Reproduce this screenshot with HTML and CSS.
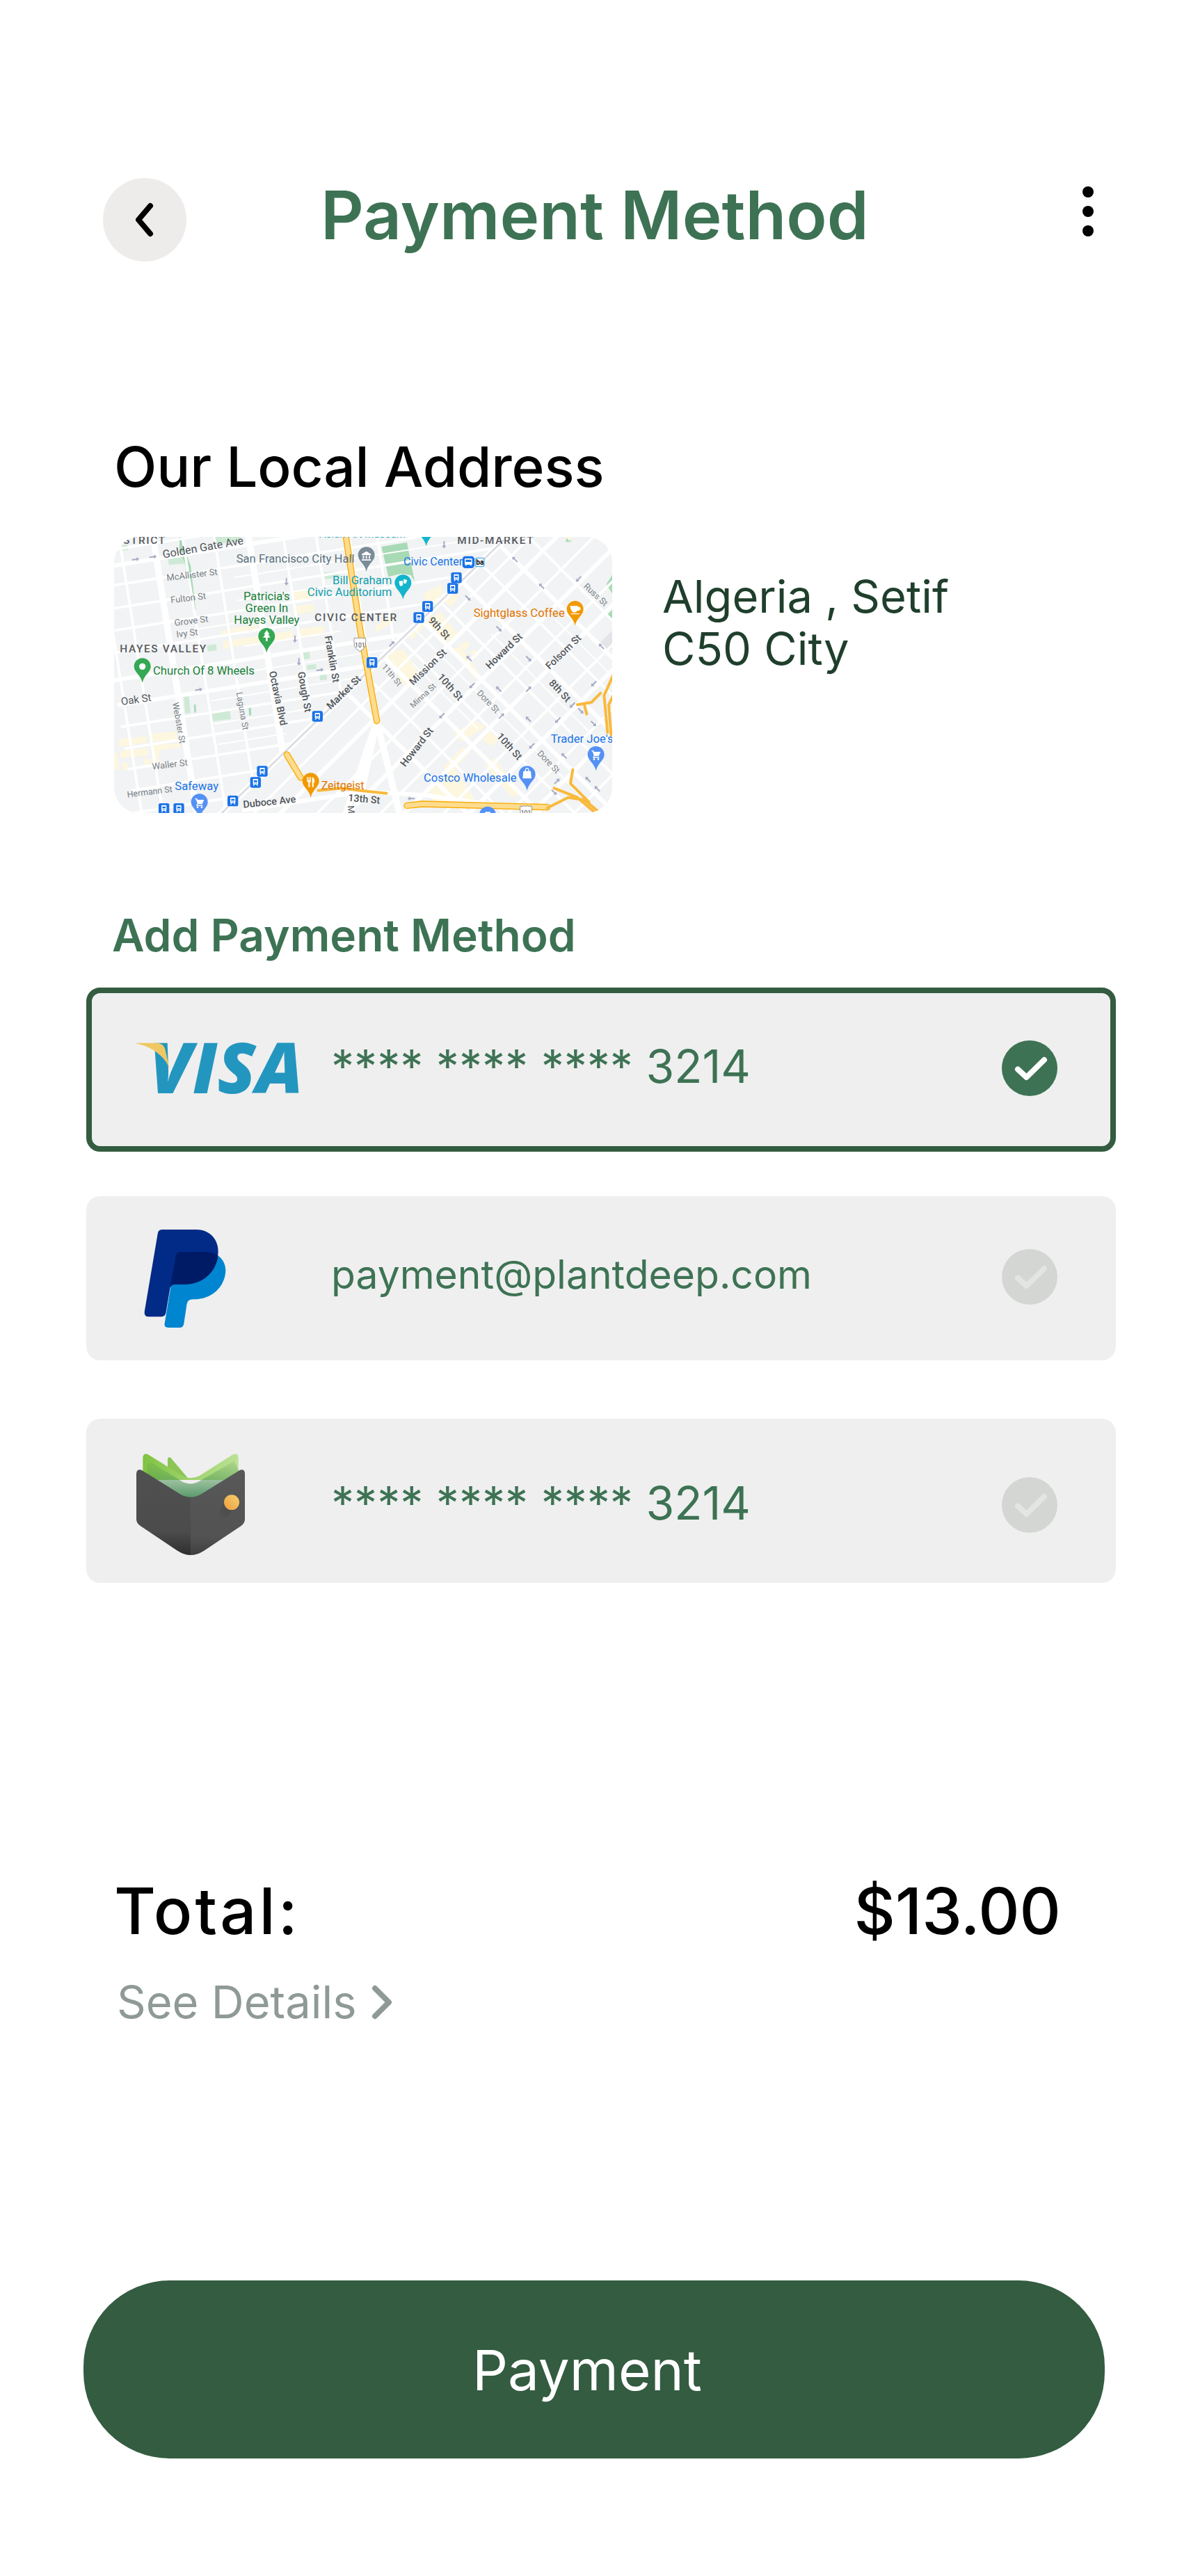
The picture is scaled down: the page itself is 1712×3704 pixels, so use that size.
FILE: index.html
```html
<!DOCTYPE html>
<html lang="en">
<head>
<meta charset="utf-8">
<title>Payment Method</title>
<link rel="stylesheet" href="styles.css">
</head>
<body>
<main class="page">
  <header class="top">
    <button class="back" aria-label="Back">
      <svg class="back-ic" viewBox="0 0 34 52"><path d="M25 6 8 26l17 20"/></svg>
    </button>
    <h1 class="title">Payment Method</h1>
    <div class="dots"><i></i><i></i><i></i></div>
  </header>

  <section class="address">
    <h2 class="address-h">Our Local Address</h2>
    <div class="address-row">
      <svg class="map" viewBox="0 6 2148 1191">
        <defs>
          <clipPath id="rnd"><rect x="0" y="6" width="2148" height="1191" rx="110"/></clipPath>
          <clipPath id="nw"><path d="M0 0H1690L480 1197H0Z"/></clipPath>
          <clipPath id="se"><path d="M1660 0H2148V1197H470Z"/></clipPath>
          <path id="pin" d="M0-36C-20-36-36-20-36 0-36 25-8 35 0 70 8 35 36 25 36 0 36-20 20-36 0-36Z"/>
          <g id="tr">
            <rect class="tr-bg" x="-23" y="-23" width="46" height="46" rx="8"/>
            <path class="wh" d="M-9-15H9Q11-15 11-12V6Q11 9 8 9L11 15H7L4 9H-4L-7 15H-11L-8 9Q-11 9-11 6V-12Q-11-15-9-15ZM-7-9V-1H7V-9ZM-5 2V6H-2V2ZM2 2V6H5V2Z"/>
          </g>
          <path id="ar" d="M-16-3H4V-9L16 0 4 9V3H-16Z"/>
          <g id="cart"><path class="wh" d="M-19-18H-11L-8-12H20L12 6H-6L-8 10H14V14H-14L-9 4-15-14H-19ZM-8 16A4 4 0 1 1-8 24 4 4 0 1 1-8 16ZM10 16A4 4 0 1 1 10 24 4 4 0 1 1 10 16Z"/></g>
          <g id="sh">
            <path class="sh" d="M-24-28Q-14-24-8-29 0-25 8-29 14-24 24-28 28-16 24-6 28 14 0 30-28 14-24-6-28-16-24-28Z"/>
            <text class="lab shn" x="0" y="12" text-anchor="middle">101</text>
          </g>
        </defs>
        <g clip-path="url(#rnd)">
          <rect class="bg" x="0" y="0" width="2148" height="1200"/>

          <!-- parks -->
          <path class="pk" d="M430 6H545L540 25 435 38ZM232 100 300 92 302 122 236 126ZM25 45 58 38 60 62 28 66ZM300 690 322 688 330 765 306 768ZM420 768 498 752 505 792 422 802ZM810 505 842 500 845 530 814 535ZM830 560 870 555 872 575 832 580ZM885 595 915 590 918 622 888 625ZM905 160 970 155 972 182 910 188ZM400 475 440 468 442 496 405 500Z"/>
          <path class="pkl" d="M282 8V60L308 130 340 322H352L330 130 304 60 300 8ZM344 730 352 728 354 762 346 764ZM580 742 590 740 592 775 582 776Z"/>
          <g transform="translate(1068 0)"><path class="pk2" d="M85 48 195 30 228 198 210 170 170 165 115 178ZM1055 210 1080 170V250ZM1055 345 1080 320V370ZM885 6H905L900 28H880Z"/><path class="gr" d="M1030 460 1080 410V490L1060 490Z"/></g>

          <!-- beige blocks -->
          <path class="bz" d="M770 240 860 228V275L770 285ZM775 305 860 295V330L775 340ZM505 400 620 385V415L505 430ZM510 450 770 410V445L510 480ZM790 405 905 390V425L790 437ZM465 410 490 405V435L465 437ZM470 455 497 452V487L470 490ZM20 880 140 865V895L20 912ZM155 855 270 845V880L155 890ZM25 930 145 915 148 950 28 960ZM160 905 285 895V915L195 925 190 985H165ZM35 980 60 978 62 1010 35 1012ZM125 965 155 962 158 995 128 997ZM0 940 15 938 20 1010H0Z"/>
          <g transform="translate(1068 0)"><path class="bz" d="M260 255 340 210 350 250 300 300ZM350 270 410 240 420 260 385 310 350 280ZM190 420 340 330 420 430 350 470 280 380 215 450ZM100 510 180 490 250 600 180 650ZM380 490 430 480 510 600 490 620ZM420 470 460 455 465 475 445 495ZM470 500 490 490 500 520 480 535ZM395 850 490 800 535 825 430 890ZM520 880 550 845 590 880 560 910ZM350 1000 440 910 470 930 370 1040ZM530 990 570 960 690 1110 650 1130ZM290 1100 400 1000 500 1160 310 1150ZM60 390 130 340 140 370 60 420ZM880 6H910L895 25Z"/></g>

          <!-- north-west street grid -->
          <g clip-path="url(#nw)">
            <g transform="rotate(-9)" class="roads">
              <path class="r3" d="M-100 60H1900M-100 212H1900M-100 310H1900M-100 405H1900M-100 500H1900M-100 820H1900M-100 915H1900M-100 1005H1900M-100 1098H1900M-100 1195H1900M-100 1290H1900"/>
              <path class="r1" d="M-100 128H1900M-100 617H1900M-100 726H1900"/>
              <path class="r4" d="M480 260H1500M480 360H900M200 455H700M480 560H900M480 670H1100M300 770H1000M300 870H700M300 960H600"/>
              <path class="r3" d="M20-100V1500M290-100V1500M425-100V1500M720-100V1500M860-100V1500M1000-100V1500M1120-100V1500M-70-100V1500"/>
              <path class="r2" d="M165-100V1500M572-100V1500"/>
            </g>
          </g>

          <!-- south-east street grid -->
          <g clip-path="url(#se)">
            <g transform="rotate(45)" class="roads">
              <path class="r3" d="M1273-2000V2000M1467-2000V2000M1660-2000V2000M1853-2000V2000M2050-2000V2000M2250-2000V2000"/>
              <path class="r1" d="M1354-2000V2000M1560-2000V2000M1732-2000V2000M1930-2000V2000M2120-2000V2000"/>
              <path class="r3" d="M-2000-340H4000M-2000-558H4000M-2000-792H4000M-2000-1032H4000M-2000-1260H4000"/>
              <path class="r1" d="M-2000-230H4000M-2000-452H4000M-2000-680H4000M-2000-920H4000M-2000-1146H4000"/>
              <path class="r4" d="M1200-630H1900M1400-630H2200M1450-850H2100M1600-1090H2000M1300-520H1700"/>
            </g>
          </g>
          <path class="r2 rc" d="M1133 800 1000 1197M1133 800 1230 1197M1133 800 1068 1100"/>
          <path class="r1 rc" d="M560 1185 1068 1105 1340 1120 1700 1170"/>

          <!-- Market St and rail -->
          <path class="r2 rc" d="M420 1240 1680 20"/>
          <path class="rail rc" d="M420 1240 1680 20"/>

          <!-- freeways -->
          <g class="hw">
            <path class="ho" d="M1000 6 1060 400 1133 800"/><path class="hi" d="M1000 6 1060 400 1133 800"/>
            <path class="ho" d="M745 945 805 1045"/><path class="hi" d="M745 945 805 1045"/>
            <path class="ho th" d="M880 1100 980 1090 1060 1100 1175 1112"/>
            <g transform="translate(1068 0)">
              <path class="ho" d="M195 1165 260 1158 800 1172"/><path class="hi" d="M195 1165 260 1158 800 1172"/>
              <path class="ho th" d="M800 1175 890 1130 960 1140 1020 1190M830 1090 930 1130 1000 1190M910 1010 900 1070 980 1150"/>
              <path class="ho th" d="M1090 590 1045 690 1060 850M1100 660 1065 730 1075 860M930 730 990 720 1030 680M970 770 960 730"/>
            </g>
          </g>

          <!-- transit -->
          <use href="#tr" x="877" y="780"/><use href="#tr" x="639" y="1017"/><use href="#tr" x="610" y="1065"/><use href="#tr" x="512" y="1145"/><use href="#tr" x="215" y="1178"/><use href="#tr" x="279" y="1178"/>
          <use href="#tr" x="1476" y="182"/><use href="#tr" x="1460" y="228"/><use href="#tr" x="1352" y="306"/><use href="#tr" x="1314" y="354"/><use href="#tr" x="1112" y="548"/>

          <!-- one-way arrows -->
          <g class="arw">
            <use href="#ar" transform="translate(93 103) rotate(-8)"/><use href="#ar" transform="translate(168 92) rotate(-8)"/><use href="#ar" transform="translate(743 200) rotate(90)"/><use href="#ar" transform="translate(780 447) rotate(90)"/><use href="#ar" transform="translate(797 545) rotate(90)"/><use href="#ar" transform="translate(888 580) rotate(-8)"/><use href="#ar" transform="translate(365 665) rotate(-8)"/>
            <g transform="translate(1068 0)">
              <use href="#ar" transform="translate(355 40) rotate(90)"/><use href="#ar" transform="translate(458 270) rotate(45)"/><use href="#ar" transform="translate(592 403) rotate(45)"/><use href="#ar" transform="translate(720 532) rotate(45)"/><use href="#ar" transform="translate(945 757) rotate(45)"/><use href="#ar" transform="translate(1000 812) rotate(45)"/><use href="#ar" transform="translate(830 1108) rotate(45)"/>
              <use href="#ar" transform="translate(1015 1092) rotate(-135)"/><use href="#ar" transform="translate(660 103) rotate(-135)"/><use href="#ar" transform="translate(775 218) rotate(-135)"/><use href="#ar" transform="translate(1033 478) rotate(-135)"/><use href="#ar" transform="translate(462 530) rotate(-135)"/><use href="#ar" transform="translate(590 662) rotate(-135)"/><use href="#ar" transform="translate(718 792) rotate(-135)"/><use href="#ar" transform="translate(872 950) rotate(-135)"/><use href="#ar" transform="translate(975 1052) rotate(-135)"/>
              <use href="#ar" transform="translate(935 188) rotate(135)"/><use href="#ar" transform="translate(475 648) rotate(135)"/><use href="#ar" transform="translate(345 778) rotate(135)"/><use href="#ar" transform="translate(1000 640) rotate(135)"/><use href="#ar" transform="translate(908 732) rotate(135)"/><use href="#ar" transform="translate(845 797) rotate(135)"/><use href="#ar" transform="translate(733 908) rotate(135)"/>
              <use href="#ar" transform="translate(130 467) rotate(-45)"/><use href="#ar" transform="translate(603 778) rotate(-45)"/><use href="#ar" transform="translate(720 662) rotate(-45)"/><use href="#ar" transform="translate(842 1060) rotate(-45)"/><use href="#ar" transform="translate(213 1135) rotate(180)"/>
            </g>
          </g>

          <!-- street labels, west -->
          <g class="lab">
            <text class="t44 area" x="-14" y="35">DISTRICT</text>
            <text class="t44 dk" transform="translate(212 98) rotate(-10)">Golden Gate Ave</text>
            <text class="t36 md" transform="translate(228 196) rotate(-7)">McAllister St</text>
            <text class="t36 md" transform="translate(245 292) rotate(-7)">Fulton St</text>
            <text class="t36 md" transform="translate(262 390) rotate(-7)">Grove St</text>
            <text class="t36 md" transform="translate(270 440) rotate(-7)">Ivy St</text>
            <text class="t44 area" x="25" y="503">HAYES VALLEY</text>
            <text class="t42 dk" transform="translate(32 732) rotate(-8)">Oak St</text>
            <text class="t34 md" transform="translate(252 722) rotate(80)">Webster St</text>
            <text class="t34 md" transform="translate(527 678) rotate(80)">Laguna St</text>
            <text class="t40 dk" transform="translate(668 588) rotate(78)">Octavia Blvd</text>
            <text class="t40 dk" transform="translate(792 590) rotate(80)">Gough St</text>
            <text class="t40 dk" transform="translate(908 435) rotate(80)">Franklin St</text>
            <text class="t40 dk" transform="translate(934 752) rotate(-44)">Market St</text>
            <text class="t36 md" transform="translate(166 1010) rotate(-7)">Waller St</text>
            <text class="t34 md" transform="translate(58 1130) rotate(-7)">Hermann St</text>
            <text class="t40 dk" transform="translate(558 1175) rotate(-6)">Duboce Ave</text>
            <text class="t40 dk" transform="translate(1008 1145) rotate(5)">13th St</text>
            <text class="t36 dk" transform="translate(1007 1166) rotate(85)">Mi</text>
            <text class="t46 hall" x="527" y="118">San Francisco City Hall</text>
            <text class="t46 gn" x="658" y="280" text-anchor="middle">Patricia's</text>
            <text class="t46 gn" x="658" y="331" text-anchor="middle">Green In</text>
            <text class="t46 gn" x="658" y="381" text-anchor="middle">Hayes Valley</text>
            <text class="t46 gn" x="168" y="600">Church Of 8 Wheels</text>
            <text class="t44 area" x="865" y="370">CIVIC CENTER</text>
            <text class="t46 tl" x="1198" y="210" text-anchor="end">Bill Graham</text>
            <text class="t46 tl" x="1198" y="260" text-anchor="end">Civic Auditorium</text>
            <text class="t46 bl" x="262" y="1098">Safeway</text>
            <text class="t44 or" x="893" y="1095">Zeitgeist</text>
            <text class="t42 tl" x="885" y="9">Asian Art Museum</text>
          </g>

          <!-- street labels, east -->
          <g class="lab" transform="translate(1068 0)">
            <text class="t44 area" x="412" y="36">MID-MARKET</text>
            <text class="t44 bl" x="180" y="130">Civic Center</text>
            <text class="t46 or" x="482" y="352">Sightglass Coffee</text>
            <text class="t34 md" transform="translate(955 222) rotate(43)">Russ St</text>
            <text class="t40 dk" transform="translate(285 368) rotate(47)">9th St</text>
            <text class="t40 dk" transform="translate(222 648) rotate(-44)">Mission St</text>
            <text class="t32 md" transform="translate(85 567) rotate(50)">11th St</text>
            <text class="t32 md" transform="translate(222 746) rotate(-43)">Minna St</text>
            <text class="t40 dk" transform="translate(325 612) rotate(48)">10th St</text>
            <text class="t40 dk" transform="translate(552 578) rotate(-44)">Howard St</text>
            <text class="t40 dk" transform="translate(810 580) rotate(-44)">Folsom St</text>
            <text class="t40 dk" transform="translate(805 638) rotate(47)">8th St</text>
            <text class="t34 md" transform="translate(495 682) rotate(46)">Dore St</text>
            <text class="t40 dk" transform="translate(187 1000) rotate(-52)">Howard St</text>
            <text class="t40 dk" transform="translate(580 868) rotate(48)">10th St</text>
            <text class="t34 md" transform="translate(755 942) rotate(46)">Dore St</text>
            <text class="t46 bl" x="815" y="893">Trader Joe's</text>
            <text class="t46 bl" x="267" y="1063">Costco Wholesale</text>
          </g>

          <!-- place pins -->
          <use href="#pin" class="p-gn" x="658" y="435"/>
          <path class="wh" d="M658 408 670 426H664L674 440H662V456H654V440H642L652 426H646Z"/>
          <use href="#pin" class="p-gn" x="122" y="565"/>
          <circle class="wh" cx="122" cy="565" r="14"/>
          <use href="#pin" class="p-gy" x="1088" y="85"/>
          <path class="wh" d="M1088 68 1108 80V85H1068V80ZM1072 88H1078V100H1072ZM1085 88H1091V100H1085ZM1098 88H1104V100H1098ZM1068 103H1108V108H1068Z"/>
          <use href="#pin" class="p-tl" x="1246" y="205"/>
          <path class="wh" d="M1228 198 1244 194 1246 212Q1240 222 1232 216ZM1248 188 1264 192 1258 208 1248 206Z"/>
          <use href="#pin" class="p-tl" x="1346" y="-25"/>
          <use href="#pin" class="p-or" x="1988" y="318"/>
          <path class="wh" d="M1966 304H2000V308Q2012 306 2012 316 2010 326 1998 324 1994 332 1984 332 1970 332 1966 304ZM1970 336H2006V340H1970Z"/>
          <use href="#pin" class="p-bl" x="2078" y="945"/>
          <use href="#cart" x="2078" y="945"/>
          <use href="#pin" class="p-bl" x="1781" y="1030"/>
          <path class="wh" d="M1765 1016H1797L1800 1048H1762ZM1772 1016Q1772 1002 1781 1002 1790 1002 1790 1016H1786Q1786 1006 1781 1006 1776 1006 1776 1016Z"/>
          <use href="#pin" class="p-bl" x="368" y="1150"/>
          <use href="#cart" x="368" y="1152"/>
          <use href="#pin" class="p-or" x="848" y="1060"/>
          <path class="wh" d="M832 1042H836V1056H839V1042H842V1056H845V1042H849V1060Q849 1064 844 1065V1085H838V1065Q832 1064 832 1060ZM854 1042Q865 1046 865 1066H860V1085H854Z"/>
          <use href="#pin" class="p-bl" x="1611" y="1205"/>
          <path class="wh" d="M1600 1192H1622V1210H1600Z"/>
          <use href="#sh" x="1060" y="470"/>
          <use href="#sh" x="1776" y="1195"/>
          <rect class="tr-bg" x="1502" y="89" width="52" height="52" rx="13"/>
          <path class="wh" d="M1516 99H1540Q1544 99 1544 103V123Q1544 126 1541 126V130H1536V126H1520V130H1515V126Q1512 126 1512 123V103Q1512 99 1516 99ZM1516 104V114H1540V104Z"/>
          <rect class="bart" x="1558" y="97" width="38" height="37" rx="7"/>
          <text class="lab bart-t" x="1561" y="127">ba</text>
        </g>
      </svg>
      <p class="address-text">Algeria , Setif<br>C50 City</p>
    </div>
  </section>

  <h2 class="pay-h">Add Payment Method</h2>
  <section class="cards">
    <article class="card card-on">
      <div class="slot slot-visa">
        <svg class="visa" viewBox="268 278 650 204">
          <text class="visa-t" x="320" y="482" textLength="620" lengthAdjust="spacingAndGlyphs">VISA</text>
          <path class="visa-y" d="M268 280H350Q378 282 384 305L402 385C390 345 340 295 268 282Z"/>
        </svg>
      </div>
      <span class="card-t">**** **** **** 3214</span>
      <svg class="check" viewBox="0 0 80 80"><circle class="c-on" cx="40" cy="40" r="40"/><path class="k-on" d="M23 41.500 35.500 53 61 28"/></svg>
    </article>
    <article class="card">
      <div class="slot slot-pp">
        <svg class="pp" viewBox="300 1028 330 394">
          <path class="pp-l" d="M445 1117H545C595 1117 630 1150 628 1195 625 1260 570 1308 505 1308H495Q475 1308 472 1328L460 1408Q457 1422 443 1422H397Q380 1422 383 1405L428 1135Q431 1117 445 1117Z"/>
          <path class="pp-d" d="M355 1045Q357 1028 372 1028H510C565 1028 600 1068 598 1120 595 1195 535 1248 465 1248H425Q408 1248 405 1262L388 1362Q385 1378 370 1378H318Q300 1378 302 1358Z"/>
          <path class="pp-x" d="M445 1117H545Q575 1117 597 1133C590 1200 535 1248 465 1248H425Q410 1248 405 1262L428 1135Q431 1117 445 1117Z"/>
        </svg>
      </div>
      <span class="card-t card-mail">payment@plantdeep.com</span>
      <svg class="check" viewBox="0 0 80 80"><circle class="c-off" cx="40" cy="40" r="40"/><path class="k-off" d="M23 41.500 35.500 53 61 28"/></svg>
    </article>
    <article class="card card-last">
      <div class="slot slot-wallet">
        <svg class="wallet" viewBox="78 86 468 438">
          <defs>
            <linearGradient id="g-note" x1="0" x2="1" y1="0" y2="0"><stop offset="0" stop-color="#80C342"/><stop offset="1" stop-color="#BCE296"/></linearGradient>
            <linearGradient id="g-in" x1="0" x2="0" y1="0" y2="1"><stop offset="0" stop-color="#5F9E55" stop-opacity=".15"/><stop offset="1" stop-color="#3E8A55" stop-opacity=".9"/></linearGradient>
            <linearGradient id="g-body" x1="0" x2="0" y1="0" y2="1"><stop offset="0" stop-color="#505050"/><stop offset=".72" stop-color="#4C4C4C"/><stop offset="1" stop-color="#2F2F2F"/></linearGradient>
            <linearGradient id="g-r" x1="0" x2="0" y1="0" y2="1"><stop offset="0" stop-color="#585858"/><stop offset=".8" stop-color="#525252"/><stop offset="1" stop-color="#3E3E3E"/></linearGradient>
            <linearGradient id="g-btn" x1="1" x2="0" y1="0" y2="1"><stop offset="0" stop-color="#F6D26F"/><stop offset="1" stop-color="#EF9C3E"/></linearGradient>
            <linearGradient id="g-sh" x1="1" x2="0" y1="0" y2="1"><stop offset="0" stop-color="#333" stop-opacity=".45"/><stop offset="1" stop-color="#333" stop-opacity="0"/></linearGradient>
          </defs>
          <path class="w-tri" d="M213 108Q218 98 226 104L300 192H213Z"/>
          <path class="w-note" d="M106 102Q110 82 128 90L280 184Q315 200 350 182L495 90Q515 82 518 102V200H106Z"/>
          <path class="w-in" d="M124 140Q128 118 148 128L280 210Q315 225 350 205L500 118 518 155V285H124Z"/>
          <path class="w-l" d="M78 172Q80 152 100 157L268 262Q290 274 312 274V524Q285 524 255 505L95 398Q78 385 78 370Z"/>
          <path class="w-r" d="M312 274Q334 274 356 262L525 157Q545 152 546 172V370Q546 385 530 398L370 505Q340 524 312 524Z"/>
          <path class="w-sh" d="M456 297 490 330 520 300 460 370 432 345Z"/>
          <circle class="w-b" cx="489" cy="297" r="33"/>
        </svg>
      </div>
      <span class="card-t">**** **** **** 3214</span>
      <svg class="check" viewBox="0 0 80 80"><circle class="c-off" cx="40" cy="40" r="40"/><path class="k-off" d="M23 41.500 35.500 53 61 28"/></svg>
    </article>
  </section>

  <section class="total">
    <div class="total-row"><strong class="total-l">Total:</strong><strong class="total-v">$13.00</strong></div>
    <a class="details">See Details <svg class="det-ic" viewBox="0 0 34 52"><path d="M7 6 27 26 7 46"/></svg></a>
  </section>

  <button class="pay">Payment</button>
</main>
</body>
</html>
```
FILE: styles.css
```css
* { box-sizing: border-box; }
html, body { margin: 0; padding: 0; background: #fff; }
body { font-family: Inter, "Liberation Sans", sans-serif; }
.page { width: 1712px; height: 3704px; overflow: hidden; }

.top { display: flex; padding: 256px 140px 0 148px; }
.back { width: 120px; height: 120px; border: 0; border-radius: 50%; background: #EEEBEB; padding: 0; display: flex; align-items: center; justify-content: center; }
.back-ic { width: 34px; height: 52px; fill: none; stroke: #000; stroke-width: 8; stroke-linecap: round; stroke-linejoin: round; }
.title { margin: 0 0 0 193px; font-size: 96px; line-height: 106px; font-weight: 600; color: #3D7354; }
.dots { margin: 12px 0 0 auto; display: flex; flex-direction: column; gap: 12px; }
.dots i { display: block; width: 16px; height: 16px; border-radius: 50%; background: #000; }

.address { padding: 247px 0 0 164px; }
.address-h { margin: 0; font-size: 80px; line-height: 96px; font-weight: 500; color: #000; letter-spacing: -0.14px; }
.address-row { display: flex; margin-top: 53px; }
.map { width: 716px; height: 397px; display: block; flex: none; }
.address-text { margin: 48px 0 0 72px; font-size: 65px; line-height: 75px; color: #1F3F2C; }

.pay-h { margin: 137px 0 0 161px; font-size: 64px; line-height: 78px; font-weight: 600; color: #3D7354; }

.cards { margin: 36px 0 0 124px; width: 1480px; display: flex; flex-direction: column; gap: 64px; }
.card { height: 236px; border: 8px solid transparent; border-radius: 20px; background: #EFEFEF; display: flex; align-items: center; }
.card-on { border-color: #335C40; }
.card-last { margin-top: 20px; padding-top: 15px; }
.slot { width: 344px; flex: none; display: flex; }
.slot-visa { padding: 0 0 5px 64px; }
.slot-pp { padding: 0 0 0 75px; }
.slot-wallet { padding: 0 0 6px 64px; }
.card-t { font-size: 66px; line-height: 78px; color: #3D7354; margin-bottom: 10px; }
.card-mail { font-size: 57px; }
.check { width: 80px; height: 80px; margin: 0 76px 4px auto; display: block; }
.c-on { fill: #3D7354; }
.c-off { fill: #D4D6D3; }
.k-on, .k-off { fill: none; stroke-width: 8; stroke-linecap: round; stroke-linejoin: round; }
.k-on { stroke: #fff; }
.k-off { stroke: #E3E5E2; }

.visa { width: 232px; height: 73px; display: block; overflow: visible; }
.visa-t { font-family: "Open Sans", "Liberation Sans", sans-serif; font-style: italic; font-weight: 800; font-size: 285px; fill: #2396BF; }
.visa-y { fill: #F0C862; }
.pp { width: 118px; height: 141px; display: block; }
.pp-l { fill: #0085D0; }
.pp-d { fill: #012B87; }
.pp-x { fill: #001B66; }
.wallet { width: 156px; height: 146px; display: block; }
.w-tri { fill: #8CC556; }
.w-note { fill: url(#g-note); }
.w-in { fill: url(#g-in); }
.w-l { fill: url(#g-body); }
.w-r { fill: url(#g-r); }
.w-sh { fill: url(#g-sh); }
.w-b { fill: url(#g-btn); }

.total { margin: 0; padding: 416px 187px 0 168px; }
.total-row { display: flex; justify-content: space-between; font-family: Inter, sans-serif; font-size: 92px; line-height: 112px; color: #000; }
.total-l, .total-v { font-weight: 500; }
.total-l { margin-left: -4px; letter-spacing: 4px; }
.details { margin-top: 36px; display: flex; align-items: center; gap: 20px; font-size: 65px; line-height: 78px; color: #8F9A96; }
.det-ic { width: 34px; height: 52px; fill: none; stroke: #8F9A96; stroke-width: 8; stroke-linecap: round; stroke-linejoin: round; }

.pay { display: block; margin: 361px 0 0 120px; width: 1468px; height: 256px; border: 0; border-radius: 124px; background: #335C40; color: #fff; font-family: Inter, sans-serif; font-size: 80px; padding: 0 20px 0 0; }

/* map */
.bg { fill: #F1F3F4; }
.pk { fill: #CEEAD6; }
.pk2 { fill: #A8DAB5; }
.pkl { fill: #A8DAB5; }
.gr { fill: #E4E5E8; }
.bz { fill: #FEF7E0; }
.roads path, .rc { fill: none; stroke: #fff; }
.rc { stroke-linecap: round; }
.r1 { stroke-width: 18; }
.r2 { stroke-width: 28; }
.r3 { stroke-width: 11; }
.r4 { stroke-width: 6; }
.rail { stroke: #DADCE0; stroke-width: 8; }
.hw path { fill: none; stroke-linejoin: round; stroke-linecap: round; }
.ho { stroke: #F9AB00; stroke-width: 28; }
.hi { stroke: #FDDC8F; stroke-width: 20; }
.th { stroke-width: 12; stroke: #F8B93C; }
.tr-bg { fill: #1A73E8; }
.wh { fill: #fff; }
.arw { fill: #A6ABC6; }
.sh { fill: #fff; stroke: #5F6368; stroke-width: 2; }
.shn { font-size: 26px; fill: #3C4043; }
.lab { font-family: Roboto, "Liberation Sans", sans-serif; }
.t32 { font-size: 35px; }
.t34 { font-size: 37px; }
.t36 { font-size: 39px; }
.t40 { font-size: 43px; font-weight: 500; }
.t42 { font-size: 45px; }
.t44 { font-size: 48px; }
.t46 { font-size: 50px; }
.dk { fill: #50555A; }
.md { fill: #7A7F85; }
.area { font-size: 46px; fill: #55595E; font-weight: 500; letter-spacing: 5px; }
.hall { fill: #5B7180; }
.gn { fill: #188038; }
.tl { fill: #129EAF; }
.bl { fill: #1A73E8; }
.or { fill: #E37400; }
.p-gn { fill: #34A853; }
.p-gy { fill: #7B8B98; }
.p-tl { fill: #12B5CB; }
.p-or { fill: #F29900; }
.p-bl { fill: #5491F5; }
.bart { fill: #fff; stroke: #4FB3E8; stroke-width: 4; }
.bart-t { font-size: 30px; font-weight: 700; fill: #000; }
```
